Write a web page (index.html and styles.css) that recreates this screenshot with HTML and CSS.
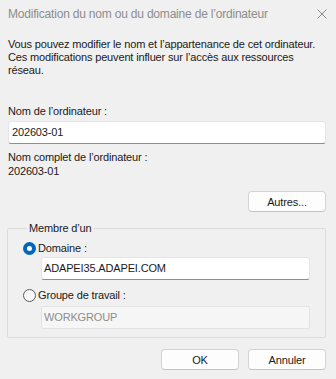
FILE: index.html
```html
<!DOCTYPE html>
<html>
<head>
  <title>Modification du nom ou du domaine de l'ordinateur</title>
  <link rel="stylesheet" href="styles.css">
</head>
<body>
  <div class="dialog">
    <div class="titlebar">
      <span class="title">Modification du nom ou du domaine de l’ordinateur</span>
      <svg class="close" width="10" height="10" viewBox="0 0 10 10">
        <path d="M0.5 0.5 L9.5 9.5 M9.5 0.5 L0.5 9.5" stroke="#8a8a8a" stroke-width="1" fill="none"/>
      </svg>
    </div>

    <div class="content">
      <p class="intro">Vous pouvez modifier le nom et l’appartenance de cet ordinateur. Ces modifications peuvent influer sur l’accès aux ressources réseau.</p>

      <label class="label" for="computerName">Nom de l’ordinateur :</label>
      <div class="field" id="computerName">202603-01</div>

      <div class="label full-label">Nom complet de l’ordinateur :</div>
      <div class="value">202603-01</div>

      <div class="more-row">
        <button class="btn">Autres...</button>
      </div>

      <fieldset class="group">
        <legend>Membre d’un</legend>

        <div class="radio-row">
          <span class="radio checked"></span>
          <span>Domaine :</span>
        </div>
        <div class="field sub-field">ADAPEI35.ADAPEI.COM</div>

        <div class="radio-row second">
          <span class="radio"></span>
          <span>Groupe de travail :</span>
        </div>
        <div class="field sub-field disabled">WORKGROUP</div>
      </fieldset>

      <div class="actions">
        <button class="btn">OK</button>
        <button class="btn">Annuler</button>
      </div>
    </div>
  </div>
</body>
</html>
```

FILE: styles.css
```css
body {
  margin: 0;
  font-family: "Liberation Sans", Arial, sans-serif;
  font-size: 11px;
  letter-spacing: -0.15px;
  color: #1a1a1a;
  background-color: #f0f0f0;
}

.dialog {
  width: 336px;
  height: 379px;
  background-color: #f0f0f0;
}

.titlebar {
  height: 28px;
  display: flex;
  align-items: center;
  justify-content: space-between;
  padding: 0 9px 0 8px;
}

.title {
  font-size: 12px;
  letter-spacing: -0.2px;
  color: #8c8c8c;
}

.close {
  display: block;
}

.content {
  padding: 10px 10px 0 8px;
  line-height: 13px;
}

.intro {
  margin: 0 0 28px 0;
}

.label {
  display: block;
}

.field {
  margin-top: 3px;
  height: 21px;
  line-height: 21px;
  padding: 0 3px;
  background-color: #fff;
  border: 1px solid #e6e6e6;
  border-bottom-color: #8f8f8f;
  border-radius: 3px;
}

.full-label {
  margin-top: 7px;
}

.value {
  margin-top: 1px;
}

.more-row {
  display: flex;
  justify-content: flex-end;
  margin-top: 13px;
}

.btn {
  width: 78px;
  height: 21px;
  padding: 0;
  font-family: inherit;
  font-size: 11px;
  letter-spacing: -0.15px;
  color: #1a1a1a;
  background-color: #fdfdfd;
  border: 1px solid #d4d4d4;
  border-bottom-color: #c4c4c4;
  border-radius: 4px;
}

.group {
  margin: 10px 0 0 -1px;
  padding: 7px 15px 8px 15px;
  border: 1px solid #dcdcdc;
  border-radius: 2px;
}

.group legend {
  padding: 0 2px;
  margin-left: 4px;
}

.radio-row {
  display: flex;
  align-items: center;
  gap: 2px;
}

.radio-row.second {
  margin-top: 9px;
}

.radio {
  width: 13px;
  height: 13px;
  box-sizing: border-box;
  border-radius: 50%;
  border: 1px solid #5a5a5a;
  background-color: #f7f7f7;
}

.radio.checked {
  border: 4px solid #0067c0;
  background-color: #fff;
}

.sub-field {
  margin-left: 18px;
  margin-top: 2px;
  padding: 0 2px;
}

.field.disabled {
  margin-top: 4px;
  color: #8d8d8d;
  background-color: #f6f6f6;
  border-color: #e3e3e3;
  border-radius: 2px;
}

.actions {
  display: flex;
  justify-content: flex-end;
  gap: 9px;
  margin-top: 11px;
}
```
